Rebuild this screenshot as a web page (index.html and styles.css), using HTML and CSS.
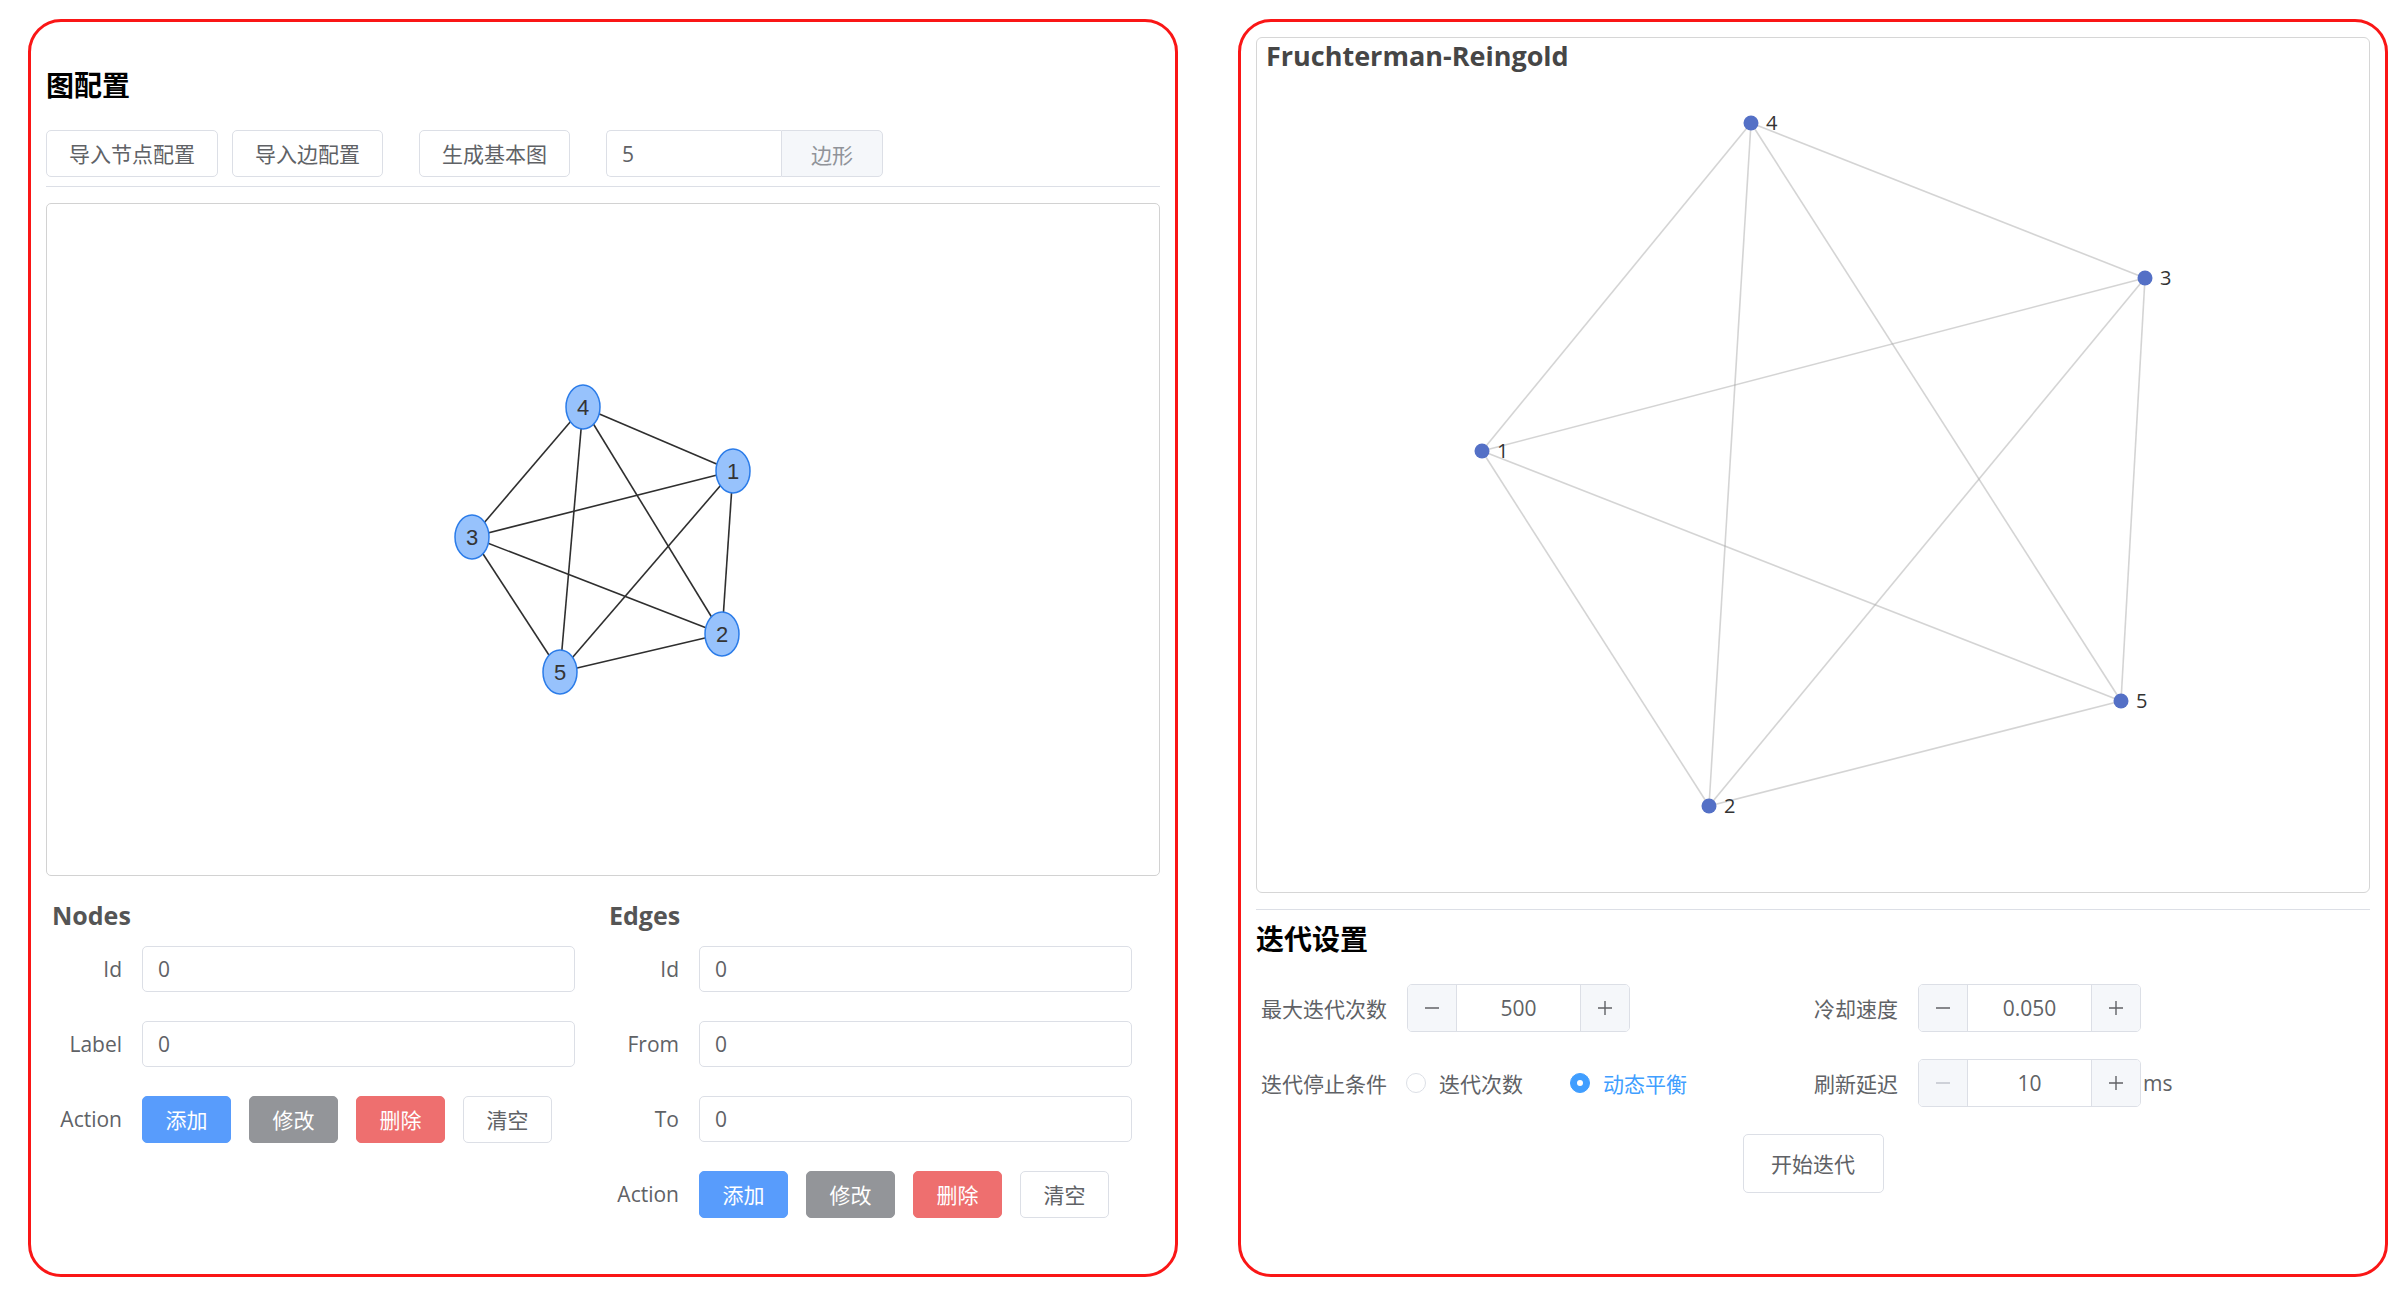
FILE: index.html
```html
<!DOCTYPE html>
<html lang="zh-CN">
<head>
<meta charset="utf-8">
<title>图配置</title>
<link rel="stylesheet" href="styles.css">
</head>
<body>
<div class="page">
  <section class="panel">
    <h3 class="panel-title">图配置</h3>
    <div class="toolbar">
      <button class="btn btn-default">导入节点配置</button>
      <button class="btn btn-default gap-s">导入边配置</button>
      <button class="btn btn-default gap-l">生成基本图</button>
      <div class="input-group gap-l">
        <input class="ig-input" value="5">
        <span class="ig-append">边形</span>
      </div>
    </div>
    <div class="divider"></div>
    <div class="graph-box">
      <svg class="graph-svg" width="1112" height="671" viewBox="0 0 1112 671">
        <g stroke="#2f2f2f" stroke-width="1.6">
          <line x1="536" y1="203" x2="686" y2="267"/>
          <line x1="536" y1="203" x2="425" y2="333"/>
          <line x1="536" y1="203" x2="513" y2="468"/>
          <line x1="536" y1="203" x2="675" y2="430"/>
          <line x1="686" y1="267" x2="425" y2="333"/>
          <line x1="686" y1="267" x2="513" y2="468"/>
          <line x1="686" y1="267" x2="675" y2="430"/>
          <line x1="425" y1="333" x2="675" y2="430"/>
          <line x1="425" y1="333" x2="513" y2="468"/>
          <line x1="513" y1="468" x2="675" y2="430"/>
        </g>
        <g fill="#97c2fc" stroke="#2b7ce9" stroke-width="1.5">
          <ellipse cx="536" cy="203" rx="17" ry="22"/>
          <ellipse cx="686" cy="267" rx="17" ry="22"/>
          <ellipse cx="425" cy="333" rx="17" ry="22"/>
          <ellipse cx="675" cy="430" rx="17" ry="22"/>
          <ellipse cx="513" cy="468" rx="17" ry="22"/>
        </g>
        <g class="vis-label" text-anchor="middle">
          <text x="536" y="211">4</text>
          <text x="686" y="275">1</text>
          <text x="425" y="341">3</text>
          <text x="675" y="438">2</text>
          <text x="513" y="476">5</text>
        </g>
      </svg>
    </div>
    <div class="forms">
      <div class="form-col">
        <h4 class="form-title">Nodes</h4>
        <div class="form-row"><label class="form-label">Id</label><input class="form-input" value="0"></div>
        <div class="form-row"><label class="form-label">Label</label><input class="form-input" value="0"></div>
        <div class="form-row">
          <label class="form-label">Action</label>
          <div class="actions">
            <button class="btn btn-act btn-primary">添加</button>
            <button class="btn btn-act btn-info">修改</button>
            <button class="btn btn-act btn-danger">删除</button>
            <button class="btn btn-act btn-default">清空</button>
          </div>
        </div>
      </div>
      <div class="form-col">
        <h4 class="form-title">Edges</h4>
        <div class="form-row"><label class="form-label">Id</label><input class="form-input" value="0"></div>
        <div class="form-row"><label class="form-label">From</label><input class="form-input" value="0"></div>
        <div class="form-row"><label class="form-label">To</label><input class="form-input" value="0"></div>
        <div class="form-row">
          <label class="form-label">Action</label>
          <div class="actions">
            <button class="btn btn-act btn-primary">添加</button>
            <button class="btn btn-act btn-info">修改</button>
            <button class="btn btn-act btn-danger">删除</button>
            <button class="btn btn-act btn-default">清空</button>
          </div>
        </div>
      </div>
    </div>
  </section>

  <section class="panel">
    <div class="chart-card">
      <svg class="chart-svg" width="1112" height="854" viewBox="0 0 1112 854">
        <g stroke="#aaaaaa" stroke-opacity="0.5" stroke-width="1.6">
          <line x1="494" y1="85" x2="888" y2="240"/>
          <line x1="494" y1="85" x2="225" y2="413"/>
          <line x1="494" y1="85" x2="864" y2="663"/>
          <line x1="494" y1="85" x2="452" y2="768"/>
          <line x1="888" y1="240" x2="225" y2="413"/>
          <line x1="888" y1="240" x2="864" y2="663"/>
          <line x1="888" y1="240" x2="452" y2="768"/>
          <line x1="225" y1="413" x2="864" y2="663"/>
          <line x1="225" y1="413" x2="452" y2="768"/>
          <line x1="864" y1="663" x2="452" y2="768"/>
        </g>
        <g fill="#5470c6">
          <circle cx="494" cy="85" r="7.5"/>
          <circle cx="888" cy="240" r="7.5"/>
          <circle cx="225" cy="413" r="7.5"/>
          <circle cx="864" cy="663" r="7.5"/>
          <circle cx="452" cy="768" r="7.5"/>
        </g>
        <g class="ec-label">
          <text x="509" y="92">4</text>
          <text x="903" y="247">3</text>
          <text x="240" y="420">1</text>
          <text x="879" y="670">5</text>
          <text x="467" y="775">2</text>
        </g>
      </svg>
      <div class="chart-title">Fruchterman-Reingold</div>
    </div>
    <div class="divider divider-r"></div>
    <h3 class="panel-title title-r">迭代设置</h3>
    <div class="set-row">
      <div class="set-col">
        <span class="set-label">最大迭代次数</span>
        <div class="num-input">
          <span class="num-btn num-dec"><svg width="16" height="16" viewBox="0 0 16 16"><path d="M1 8h14" stroke="#606266" stroke-width="1.4"/></svg></span>
          <span class="num-val">500</span>
          <span class="num-btn num-inc"><svg width="16" height="16" viewBox="0 0 16 16"><path d="M1 8h14M8 1v14" stroke="#606266" stroke-width="1.4"/></svg></span>
        </div>
      </div>
      <div class="set-col">
        <span class="set-label">冷却速度</span>
        <div class="num-input">
          <span class="num-btn num-dec"><svg width="16" height="16" viewBox="0 0 16 16"><path d="M1 8h14" stroke="#606266" stroke-width="1.4"/></svg></span>
          <span class="num-val">0.050</span>
          <span class="num-btn num-inc"><svg width="16" height="16" viewBox="0 0 16 16"><path d="M1 8h14M8 1v14" stroke="#606266" stroke-width="1.4"/></svg></span>
        </div>
      </div>
    </div>
    <div class="set-row row-2">
      <div class="set-col">
        <span class="set-label label-radio">迭代停止条件</span>
        <span class="radio"><span class="radio-dot"></span><span class="radio-text">迭代次数</span></span>
        <span class="radio radio-on"><span class="radio-dot"></span><span class="radio-text">动态平衡</span></span>
      </div>
      <div class="set-col">
        <span class="set-label">刷新延迟</span>
        <div class="num-input">
          <span class="num-btn num-dec"><svg width="16" height="16" viewBox="0 0 16 16"><path d="M1 8h14" stroke="#c0c4cc" stroke-width="1.4"/></svg></span>
          <span class="num-val">10</span>
          <span class="num-btn num-inc"><svg width="16" height="16" viewBox="0 0 16 16"><path d="M1 8h14M8 1v14" stroke="#606266" stroke-width="1.4"/></svg></span>
        </div>
        <span class="unit">ms</span>
      </div>
    </div>
    <div class="start-wrap">
      <button class="btn btn-default btn-start">开始迭代</button>
    </div>
  </section>
</div>
</body>
</html>
```

FILE: styles.css
```css
* { box-sizing: border-box; }
html, body {
  margin: 0;
  background: #ffffff;
}
body {
  font-family: "Open Sans", "Noto Sans CJK SC", sans-serif;
  color: #606266;
}
.page {
  display: flex;
  gap: 60px;
  padding: 19px 0 0 28px;
}
.panel {
  width: 1150px;
  height: 1258px;
  border: 3px solid #fa1616;
  border-radius: 33px;
  padding: 15px;
  display: flex;
  flex-direction: column;
}
.panel-title {
  margin: 27px 0 0 0;
  font-family: "Noto Sans CJK SC", sans-serif;
  font-size: 28px;
  font-weight: 700;
  line-height: 40px;
  height: 40px;
  color: #000;
}
.toolbar {
  margin-top: 26px;
  display: flex;
  align-items: center;
  height: 47px;
}
.btn {
  height: 47px;
  border-radius: 5px;
  border: 1px solid #dcdfe6;
  background: #fff;
  font-family: "Noto Sans CJK SC", sans-serif;
  font-size: 21px;
  line-height: 1;
  color: #606266;
  padding: 0 22px;
  cursor: pointer;
}
.gap-s { margin-left: 14px; }
.gap-l { margin-left: 36px; }
.input-group {
  display: flex;
  height: 47px;
}
.ig-input {
  width: 175px;
  height: 47px;
  border: 1px solid #dcdfe6;
  border-right: none;
  border-radius: 5px 0 0 5px;
  padding: 0 15px;
  font-family: "Open Sans", sans-serif;
  font-size: 21px;
  color: #606266;
  outline: none;
}
.ig-append {
  width: 102px;
  height: 47px;
  border: 1px solid #dcdfe6;
  border-radius: 0 5px 5px 0;
  background: #f5f7fa;
  color: #909399;
  font-family: "Noto Sans CJK SC", sans-serif;
  font-size: 21px;
  display: flex;
  align-items: center;
  justify-content: center;
}
.divider {
  margin-top: 9px;
  height: 1px;
  background: #dcdfe6;
}
.graph-box {
  margin-top: 16px;
  height: 673px;
  border: 1px solid #d2d2d2;
  border-radius: 5px;
  overflow: hidden;
}
.graph-svg { display: block; }
.vis-label text {
  font-family: "Liberation Sans", Arial, sans-serif;
  font-size: 22px;
  fill: #343434;
}
.forms {
  margin-top: 21px;
  margin-left: 6px;
  display: grid;
  grid-template-columns: 523px 523px;
  column-gap: 34px;
}
.form-title {
  margin: 0 0 13px 0;
  font-family: "Open Sans", sans-serif;
  font-size: 25px;
  font-weight: 700;
  line-height: 36px;
  height: 36px;
  color: #555;
}
.form-row {
  display: flex;
  align-items: center;
  height: 46px;
  margin-bottom: 29px;
}
.form-label {
  width: 90px;
  flex: none;
  text-align: right;
  padding-right: 20px;
  font-size: 21px;
  color: #606266;
}
.form-input {
  width: 433px;
  height: 46px;
  border: 1px solid #dcdfe6;
  border-radius: 5px;
  padding: 0 15px;
  font-family: "Open Sans", sans-serif;
  font-size: 21px;
  color: #606266;
  outline: none;
}
.actions {
  display: flex;
  gap: 18px;
}
.btn-act {
  width: 89px;
  padding: 0;
}
.btn-primary { background: #589cfc; border-color: #589cfc; color: #fff; }
.btn-info { background: #939599; border-color: #939599; color: #fff; }
.btn-danger { background: #ee6f6f; border-color: #ee6f6f; color: #fff; }

.chart-card {
  position: relative;
  height: 856px;
  border: 1px solid #d6d6d6;
  border-radius: 6px;
  flex: none;
}
.chart-svg {
  position: absolute;
  left: 0;
  top: 0;
}
.ec-label text {
  font-family: "Open Sans", sans-serif;
  font-size: 20px;
  fill: #333;
}
.chart-title {
  position: relative;
  padding-left: 9px;
  font-family: "Open Sans", sans-serif;
  font-size: 27px;
  font-weight: 700;
  line-height: 36px;
  color: #464646;
}
.divider-r { margin-top: 16px; }
.title-r { margin-top: 8px; }
.set-row {
  margin-top: 26px;
  padding-left: 5px;
  display: flex;
  height: 48px;
}
.set-row.row-2 { margin-top: 27px; }
.set-col {
  width: 553px;
  display: flex;
  align-items: center;
}
.set-label {
  font-family: "Noto Sans CJK SC", sans-serif;
  font-size: 21px;
  color: #606266;
  margin-right: 20px;
}
.label-radio { margin-right: 19px; }
.num-input {
  width: 223px;
  height: 48px;
  border: 1px solid #dcdfe6;
  border-radius: 5px;
  display: flex;
  overflow: hidden;
}
.num-btn {
  width: 49px;
  flex: none;
  background: #f5f7fa;
  display: flex;
  align-items: center;
  justify-content: center;
}
.num-dec { border-right: 1px solid #dcdfe6; }
.num-inc { border-left: 1px solid #dcdfe6; }
.num-val {
  flex: 1;
  display: flex;
  align-items: center;
  justify-content: center;
  font-family: "Open Sans", sans-serif;
  font-size: 21px;
  color: #606266;
}
.unit {
  margin-left: 2px;
  font-family: "Open Sans", sans-serif;
  font-size: 21px;
  color: #606266;
}
.radio {
  display: flex;
  align-items: center;
  margin-right: 47px;
}
.radio-dot {
  width: 20px;
  height: 20px;
  border-radius: 50%;
  border: 1px solid #dcdfe6;
  background: #fff;
  margin-right: 13px;
  position: relative;
}
.radio-text {
  font-family: "Noto Sans CJK SC", sans-serif;
  font-size: 21px;
  color: #606266;
}
.radio-on .radio-dot {
  background: #409eff;
  border-color: #409eff;
}
.radio-on .radio-dot::after {
  content: "";
  position: absolute;
  left: 50%;
  top: 50%;
  width: 6px;
  height: 6px;
  margin: -3px 0 0 -3px;
  border-radius: 50%;
  background: #fff;
}
.radio-on .radio-text { color: #409eff; }
.start-wrap {
  margin-top: 27px;
  display: flex;
  justify-content: center;
}
.btn-start {
  width: 141px;
  height: 59px;
  padding: 0;
}
```
